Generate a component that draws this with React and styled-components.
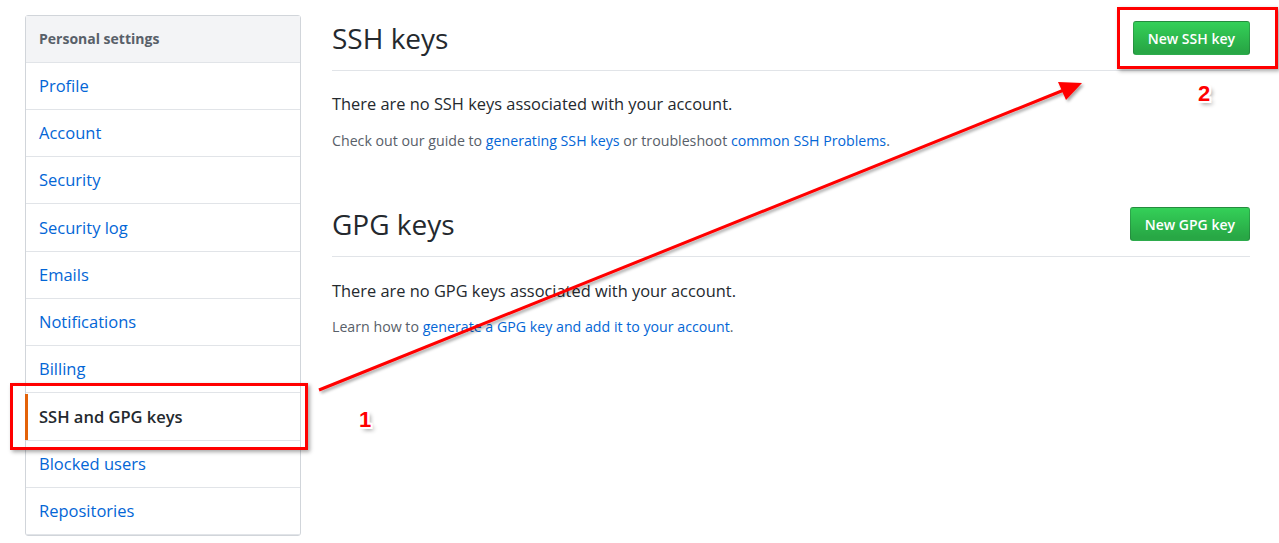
import styled, { createGlobalStyle } from "styled-components";

const GlobalStyle = createGlobalStyle`
  html, body {
    margin: 0;
    padding: 0;
    background: #fff;
  }
  body {
    font-family: "Open Sans", "Noto Sans", Arial, sans-serif;
    color: #24292e;
  }
`;

const menuItems = [
  "Profile",
  "Account",
  "Security",
  "Security log",
  "Emails",
  "Notifications",
  "Billing",
  "SSH and GPG keys",
  "Blocked users",
  "Repositories",
];

const Page = styled.div`
  position: relative;
  width: 1279px;
  height: 543px;
  overflow: hidden;
  display: flex;
  align-items: flex-start;
  padding: 15px 0 0 25px;
  box-sizing: border-box;
`;

const Menu = styled.nav`
  width: 276px;
  flex-shrink: 0;
  border: 1px solid #d1d5da;
  border-radius: 3px;
  box-sizing: border-box;
`;

const MenuHeading = styled.div`
  height: 46px;
  line-height: 46px;
  padding-left: 13px;
  background: #f3f4f6;
  border-bottom: 1px solid #e1e4e8;
  font-size: 14px;
  font-weight: 700;
  color: #586069;
`;

const MenuItem = styled.a`
  display: block;
  position: relative;
  height: ${(p) => (p.$tall ? 47 : 46)}px;
  line-height: ${(p) => (p.$tall ? 47 : 46)}px;
  padding-left: 13px;
  border-bottom: 1px solid #e1e4e8;
  font-size: 16.5px;
  color: ${(p) => (p.$active ? "#24292e" : "#0366d6")};
  font-weight: ${(p) => (p.$active ? 600 : 400)};
  text-decoration: none;

  ${(p) =>
    p.$active &&
    `
    &::before {
      content: "";
      position: absolute;
      left: -1px;
      top: 1px;
      bottom: 0;
      width: 3px;
      background: #e36209;
    }
  `}
`;

const Main = styled.main`
  width: 918px;
  margin-left: 31px;
`;

const Subhead = styled.div`
  display: flex;
  align-items: center;
  justify-content: space-between;
  padding: 5px 0 14px;
  border-bottom: 1px solid #e1e4e8;
  margin-top: ${(p) => p.$top || 0}px;
`;

const Title = styled.h2`
  margin: 0;
  font-size: 28px;
  font-weight: 400;
  line-height: 36px;
  color: #24292e;
`;

const GreenButton = styled.button`
  height: 34px;
  padding: 0 14px;
  border: 1px solid rgba(27, 31, 35, 0.2);
  border-radius: 3px;
  background-image: linear-gradient(-180deg, #34d058 0%, #28a745 90%);
  color: #fff;
  font-family: inherit;
  font-size: 14px;
  font-weight: 600;
`;

const Blank = styled.p`
  margin: ${(p) => p.$top}px 0 0;
  font-size: 16.4px;
  line-height: 24px;
  color: #24292e;
`;

const Note = styled.p`
  margin: ${(p) => p.$top}px 0 0;
  font-size: 14.2px;
  line-height: 21px;
  color: #586069;

  a {
    color: #0366d6;
    text-decoration: none;
  }
`;

const Frame = styled.div`
  position: absolute;
  left: ${(p) => p.$x}px;
  top: ${(p) => p.$y}px;
  width: ${(p) => p.$w}px;
  height: ${(p) => p.$h}px;
  border: 3px solid #ff0000;
  box-sizing: border-box;
  box-shadow: 2px 2px 4px rgba(0, 0, 0, 0.35);
`;

const Marker = styled.span`
  position: absolute;
  left: ${(p) => p.$x}px;
  top: ${(p) => p.$y}px;
  font-family: "Liberation Sans", Arial, sans-serif;
  font-size: 22px;
  font-weight: 700;
  line-height: 22px;
  color: #ff0000;
  text-shadow: -2px -2px 0 #fff, 0 -2px 0 #fff, 2px -2px 0 #fff,
    2px 0 0 #fff, 2px 2px 0 #fff, 0 2px 0 #fff, -2px 2px 0 #fff,
    -2px 0 0 #fff, 3px 3px 4px rgba(0, 0, 0, 0.45);
`;

const ArrowLayer = styled.svg`
  position: absolute;
  left: 0;
  top: 0;
  pointer-events: none;
`;

export default function App() {
  return (
    <>
      <GlobalStyle />
      <Page>
        <Menu>
          <MenuHeading>Personal settings</MenuHeading>
          {menuItems.map((item, i) => (
            <MenuItem
              key={item}
              href="#"
              $tall={i === 3 || i === 7}
              $active={item === "SSH and GPG keys"}
            >
              {item}
            </MenuItem>
          ))}
        </Menu>

        <Main>
          <Subhead>
            <Title>SSH keys</Title>
            <GreenButton>New SSH key</GreenButton>
          </Subhead>
          <Blank $top={21}>There are no SSH keys associated with your account.</Blank>
          <Note $top={14}>
            Check out our guide to <a href="#">generating SSH keys</a> or troubleshoot{" "}
            <a href="#">common SSH Problems</a>.
          </Note>

          <Subhead $top={50}>
            <Title>GPG keys</Title>
            <GreenButton>New GPG key</GreenButton>
          </Subhead>
          <Blank $top={22}>There are no GPG keys associated with your account.</Blank>
          <Note $top={13}>
            Learn how to <a href="#">generate a GPG key and add it to your account</a>.
          </Note>
        </Main>

        <Frame $x={10} $y={383} $w={298} $h={67} />
        <Frame $x={1117} $y={7} $w={161} $h={62} />
        <ArrowLayer width="1279" height="543" viewBox="0 0 1279 543">
          <defs>
            <filter id="shadow" x="-5%" y="-5%" width="110%" height="110%">
              <feDropShadow dx="2" dy="2" stdDeviation="1.5" floodColor="#000" floodOpacity="0.35" />
            </filter>
          </defs>
          <g filter="url(#shadow)">
            <line x1="319" y1="390" x2="1064" y2="90" stroke="#ff0000" strokeWidth="3" />
            <polygon points="1082,83 1058,82 1066,100" fill="#ff0000" />
          </g>
        </ArrowLayer>
        <Marker $x={359} $y={409}>1</Marker>
        <Marker $x={1198} $y={83}>2</Marker>
      </Page>
    </>
  );
}
